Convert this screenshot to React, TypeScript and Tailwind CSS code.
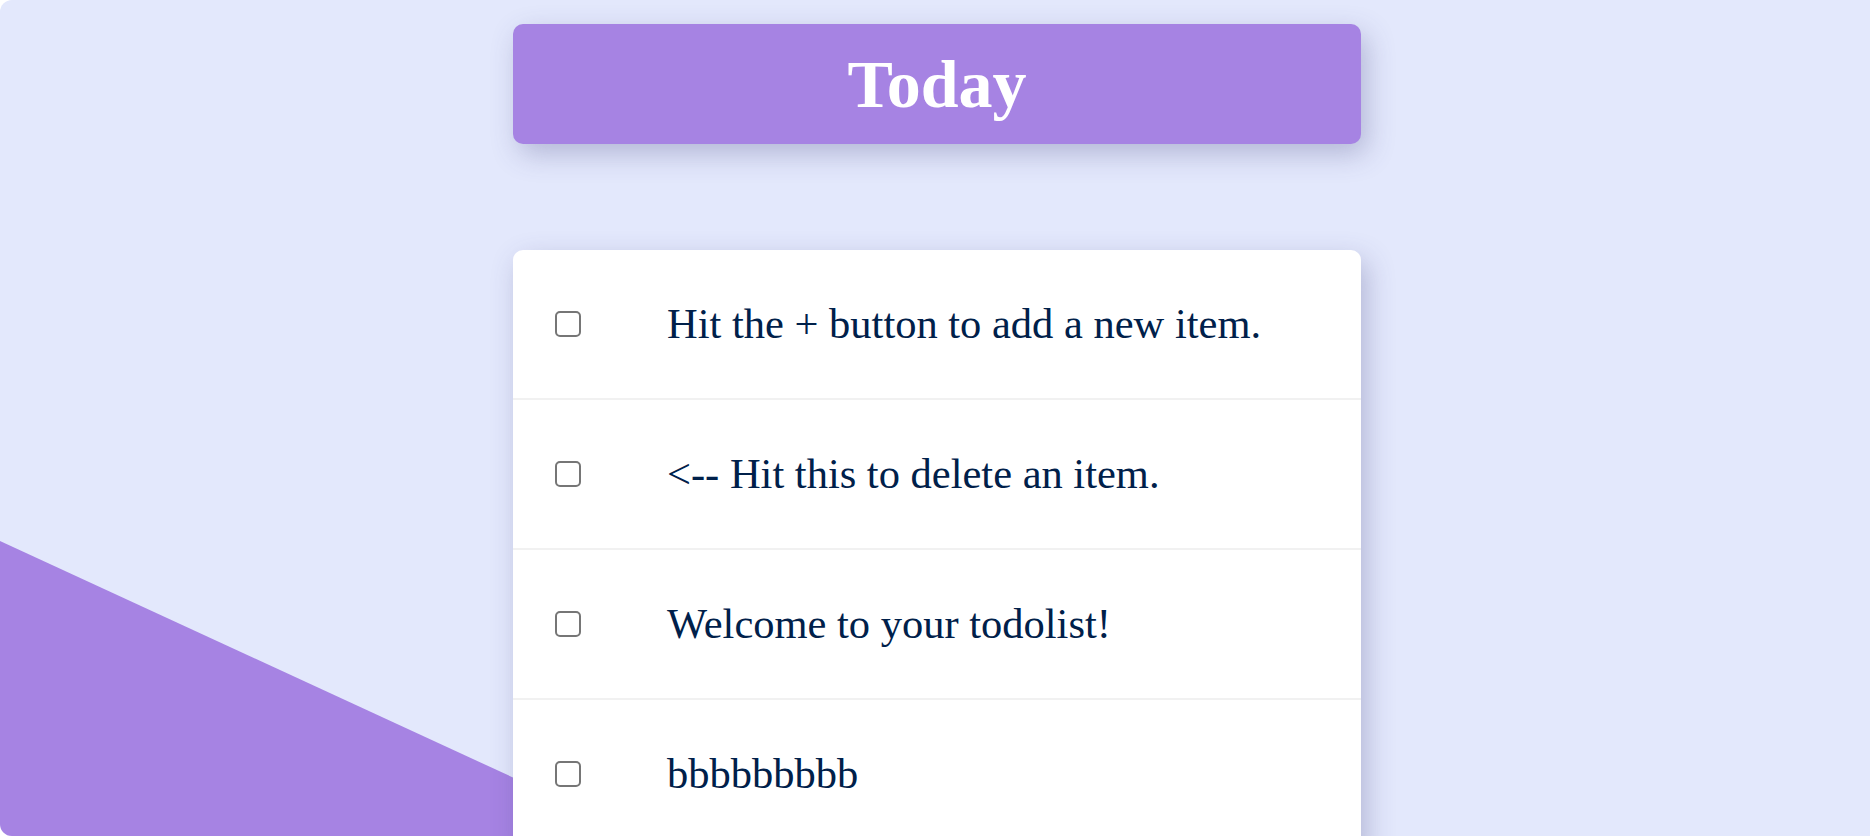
import React from 'react';

const items = [
  'Hit the + button to add a new item.',
  '<-- Hit this to delete an item.',
  'Welcome to your todolist!',
  'bbbbbbbbb',
];

const App: React.FC = () => {
  return (
    <div className="relative h-[836px] w-full overflow-hidden rounded-l-[12px] bg-[#e3e8fc] font-['Liberation_Serif','Times_New_Roman',serif]">
      {/* decorative purple wedge, bottom-left */}
      <div className="absolute inset-0 bg-[#a683e3] [clip-path:polygon(0_541px,640px_836px,0_836px)]" />

      <div className="relative flex flex-col items-center pl-[4px]">
        <div className="mt-[24px] flex h-[120px] w-[848px] items-center justify-center rounded-[10px] bg-[#a683e3] shadow-[6px_10px_28px_rgba(70,70,130,0.3)]">
          <h1 className="text-[68px] font-bold leading-none text-white">Today</h1>
        </div>

        <div className="mt-[106px] w-[848px] rounded-t-[10px] bg-white shadow-[6px_10px_28px_rgba(70,70,130,0.3)]">
          {items.map((item) => (
            <div
              key={item}
              className="flex h-[150px] items-center border-b-2 border-[#f1f1f1] pl-[42px]"
            >
              <input
                type="checkbox"
                className="h-[26px] w-[26px] shrink-0 appearance-none rounded-[5px] border-2 border-[#767676] bg-white"
              />
              <p className="ml-[86px] text-[42.5px] text-[#00204a]">{item}</p>
            </div>
          ))}
        </div>
      </div>
    </div>
  );
};

export default App;
